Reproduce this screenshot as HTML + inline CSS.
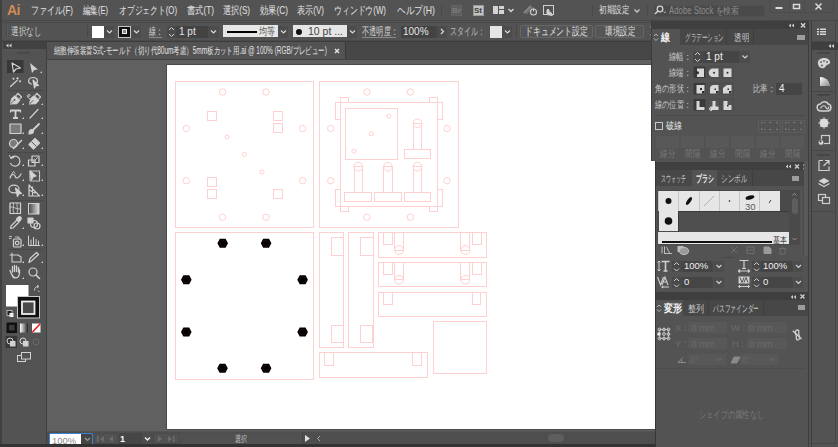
<!DOCTYPE html>
<html><head><meta charset="utf-8">
<style>
*{box-sizing:border-box;margin:0;padding:0}
html,body{width:838px;height:447px;overflow:hidden;background:#535353;font-family:"Liberation Sans",sans-serif;color:#d9d9d9}
.a{position:absolute}
.t{position:absolute;white-space:nowrap;font-size:10px;line-height:12px}
.box{position:absolute;background:#454545}
.fit{overflow:visible}.fit>span{display:inline-block;transform-origin:0 50%}
.sep{position:absolute;background:#3e3e3e}
</style></head><body>
<!-- MENU BAR -->
<div class="a" style="left:0;top:0;width:838px;height:20px;background:#535353"></div>
<div class="a" style="left:0;top:20px;width:838px;height:1px;background:#474747"></div>
<div class="t" style="left:7px;top:3px;font-size:14px;line-height:15px;font-weight:bold;color:#d18b57;letter-spacing:-0.5px">Ai</div>
<div id="menus"></div>
<div class="t fit" style="left:31px;top:4px;width:42px;font-size:11px;color:#e4e4e4"><span>ファイル(F)</span></div>
<div class="t fit" style="left:83px;top:4px;width:25px;font-size:11px;color:#e4e4e4"><span>編集(E)</span></div>
<div class="t fit" style="left:119px;top:4px;width:58px;font-size:11px;color:#e4e4e4"><span>オブジェクト(O)</span></div>
<div class="t fit" style="left:187px;top:4px;width:27px;font-size:11px;color:#e4e4e4"><span>書式(T)</span></div>
<div class="t fit" style="left:223px;top:4px;width:27px;font-size:11px;color:#e4e4e4"><span>選択(S)</span></div>
<div class="t fit" style="left:260px;top:4px;width:28px;font-size:11px;color:#e4e4e4"><span>効果(C)</span></div>
<div class="t fit" style="left:297px;top:4px;width:27px;font-size:11px;color:#e4e4e4"><span>表示(V)</span></div>
<div class="t fit" style="left:334px;top:4px;width:52px;font-size:11px;color:#e4e4e4"><span>ウィンドウ(W)</span></div>
<div class="t fit" style="left:397px;top:4px;width:38px;font-size:11px;color:#e4e4e4"><span>ヘルプ(H)</span></div>
<div class="a" style="left:441px;top:5px;width:1px;height:11px;background:#4a4a4a"></div>
<div class="a" style="left:451px;top:5px;width:11px;height:11px;background:#5e5e5e;border:1px solid #646464"></div>
<div class="t" style="left:452px;top:5px;font-size:8px;line-height:11px;color:#7c7c7c;font-weight:bold">Br</div>
<div class="a" style="left:473px;top:5px;width:11px;height:11px;background:#c4c4c4;border:1px solid #9a9a9a"></div>
<div class="t" style="left:474px;top:5px;font-size:8px;line-height:11px;color:#3e3e3e;font-weight:bold">St</div>
<div class="a" style="left:493px;top:6px;width:5px;height:8px;background:#d4d4d4"></div>
<div class="a" style="left:499px;top:6px;width:5px;height:3px;background:#d4d4d4"></div>
<div class="a" style="left:499px;top:10px;width:5px;height:4px;background:#d4d4d4"></div>
<svg class="a" style="left:0;top:0" width="838" height="21" viewBox="0 0 838 21">
<g fill="none" stroke="#d8d8d8" stroke-width="1.3">
<path d="M508.5 9 l2.5 2.5 l2.5 -2.5"/>
<path d="M634.5 9.5 l2.5 2.5 l2.5 -2.5" stroke="#c8c8c8"/>
<path d="M524 13 L531 6" stroke="#888" stroke-width="2"/><path d="M526 14 L533 7" stroke="#777" stroke-width="1.5"/>
<circle cx="533.5" cy="12" r="3" stroke="#cfcfcf" stroke-width="1.1"/><path d="M533.5 8.5 v3" stroke="#cfcfcf" stroke-width="1.1"/>
<rect x="543.5" y="5.5" width="10" height="9" stroke="#cfcfcf" stroke-width="1"/>
<path d="M547 15 v-5 l1 -1 l1 1 v2 l2 0.5 l1 2 v1.5" fill="#cfcfcf" stroke="#cfcfcf" stroke-width="1"/>

<path d="M775.5 8 h7" stroke="#dcdcdc" stroke-width="2"/>
<rect x="793.5" y="4.5" width="6" height="4" stroke="#dcdcdc" stroke-width="1.5"/>
<path d="M815.5 3.5 l6 6 M821.5 3.5 l-6 6" stroke="#dcdcdc" stroke-width="1.5"/>
</g></svg>
<div class="a" style="left:592px;top:5px;width:1px;height:11px;background:#4a4a4a"></div>
<div class="t fit" style="left:599px;top:4px;width:30px;font-size:10px;color:#e0e0e0"><span>初期設定</span></div>
<div class="a" style="left:647px;top:5px;width:1px;height:11px;background:#4a4a4a"></div>
<div class="a" style="left:654px;top:5px;width:111px;height:12px;background:#4a4a4a;border-radius:3px;border:1px solid #505050"></div>
<div class="t fit" style="left:669px;top:5px;width:70px;font-size:10px;color:#8c8c8c"><span>Adobe Stock を検索</span></div>
<svg class="a" style="left:650px;top:0" width="20" height="20" viewBox="650 0 20 20"><g fill="none" stroke="#d0d0d0"><circle cx="660" cy="9" r="2.8" stroke-width="1.3"/><path d="M658 11 l-3 3" stroke-width="1.6"/><path d="M663.5 11.5 l1.2 1.2 l1.2 -1.2" stroke-width="0.9"/></g></svg>
<div class="a" style="left:770px;top:-1px;width:64px;height:14px;border:1px solid #4c4c4c;border-radius:0 0 3px 3px"></div>
<div class="a" style="left:789px;top:0;width:1px;height:12px;background:#4c4c4c"></div>
<div class="a" style="left:804px;top:0;width:1px;height:12px;background:#4c4c4c"></div>
<!-- CONTROL BAR -->
<div class="a" style="left:0;top:21px;width:838px;height:20px;background:#535353"></div>
<div class="a" style="left:0;top:41px;width:838px;height:1px;background:#3c3c3c"></div>

<div class="a" style="left:1px;top:22px;width:652px;height:19px;border:1px solid #4a4a4a;border-radius:2px"></div>
<div class="a" style="left:6px;top:26px;width:1px;height:11px;background:#474747"></div>
<div class="a" style="left:7px;top:26px;width:1px;height:11px;background:#5e5e5e"></div>
<div class="t fit" style="left:11px;top:25px;width:30px;font-size:11px;color:#d2d2d2"><span>選択なし</span></div>
<div class="a" style="left:87px;top:25px;width:1px;height:12px;background:#474747"></div>
<div class="a" style="left:92px;top:26px;width:12px;height:12px;background:#fff"></div>
<div class="a" style="left:104px;top:26px;width:10px;height:12px;background:#4c4c4c"></div>
<div class="a" style="left:118px;top:26px;width:13px;height:12px;background:#111;border:1px solid #c4c4c4"></div>
<div class="a" style="left:122px;top:29px;width:5px;height:5px;border:1px solid #eee;background:#888"></div>
<div class="a" style="left:131px;top:26px;width:10px;height:12px;background:#4c4c4c"></div>
<div class="t fit" style="left:149px;top:25px;width:14px;font-size:11px;color:#d2d2d2"><span>線：</span></div>
<div class="a" style="left:149px;top:37px;width:13px;height:1px;background:#8a8a8a"></div>
<div class="a" style="left:167px;top:26px;width:9px;height:12px;background:#4a4a4a"></div>
<div class="a" style="left:176px;top:26px;width:32px;height:12px;background:#434343"></div>
<div class="t" style="left:179px;top:26px;font-size:10px;color:#e6e6e6">1 pt</div>
<div class="a" style="left:208px;top:26px;width:11px;height:12px;background:#4c4c4c"></div>
<div class="a" style="left:223px;top:25px;width:55px;height:12px;background:#e6e6e6"></div>
<div class="a" style="left:227px;top:31px;width:30px;height:1.5px;background:#000"></div>
<div class="t fit" style="left:259px;top:25px;width:16px;font-size:11px;color:#555"><span>均等</span></div>
<div class="a" style="left:278px;top:26px;width:10px;height:12px;background:#4c4c4c"></div>
<div class="a" style="left:293px;top:25px;width:54px;height:12px;background:#e6e6e6"></div>
<div class="a" style="left:296px;top:29px;width:6px;height:6px;border-radius:50%;background:#111"></div>
<div class="t" style="left:308px;top:25px;font-size:10.5px;color:#444">10 pt ...</div>
<div class="a" style="left:347px;top:26px;width:10px;height:12px;background:#4c4c4c"></div>
<div class="t fit" style="left:362px;top:25px;width:36px;font-size:11px;color:#d2d2d2"><span>不透明度：</span></div>
<div class="a" style="left:362px;top:37px;width:34px;height:1px;background:#8a8a8a"></div>
<div class="a" style="left:401px;top:26px;width:36px;height:12px;background:#434343"></div>
<div class="t" style="left:403px;top:26px;font-size:10px;color:#e6e6e6">100%</div>
<div class="a" style="left:437px;top:26px;width:10px;height:12px;background:#4c4c4c"></div>
<div class="t fit" style="left:450px;top:25px;width:35px;font-size:11px;color:#bdbdbd"><span>スタイル：</span></div>
<div class="a" style="left:490px;top:26px;width:12px;height:12px;background:#e6e6e6"></div>
<div class="a" style="left:502px;top:26px;width:10px;height:12px;background:#4c4c4c"></div>
<div class="a" style="left:516px;top:25px;width:1px;height:12px;background:#474747"></div>
<div class="a" style="left:520px;top:25px;width:73px;height:13px;border:1px solid #666;border-radius:2px;background:#555"></div>
<div class="t fit" style="left:525px;top:25px;width:63px;font-size:11px;color:#e0e0e0"><span>ドキュメント設定</span></div>
<div class="a" style="left:595px;top:25px;width:49px;height:13px;border:1px solid #666;border-radius:2px;background:#555"></div>
<div class="t fit" style="left:605px;top:25px;width:30px;font-size:11px;color:#e0e0e0"><span>環境設定</span></div>
<svg class="a" style="left:0;top:20px" width="660" height="22" viewBox="0 20 660 22">
<g fill="none" stroke="#d8d8d8" stroke-width="1.2">
<path d="M107 30.5 l2.5 2.5 l2.5 -2.5 M134 30.5 l2.5 2.5 l2.5 -2.5 M211 30.5 l2.5 2.5 l2.5 -2.5 M281 30.5 l2.5 2.5 l2.5 -2.5 M350 30.5 l2.5 2.5 l2.5 -2.5 M505 30.5 l2.5 2.5 l2.5 -2.5"/>
<path d="M441 29 l2.5 2.5 l-2.5 2.5"/>
<path d="M169 30 l2.5 -2.5 l2.5 2.5 M169 34 l2.5 2.5 l2.5 -2.5" stroke-width="1"/>
<path d="M650 27 a4 4 0 0 1 0 8" stroke="#999"/>
</g></svg>
<!-- TAB BAR -->
<div class="a" style="left:47px;top:42px;width:605px;height:18px;background:#474747"></div>
<div class="a" style="left:47px;top:42px;width:298px;height:17px;background:#535353"></div>
<div class="a" style="left:345px;top:42px;width:1px;height:17px;background:#3a3a3a"></div>
<div class="a" style="left:47px;top:59px;width:608px;height:1px;background:#424242"></div>

<div class="t fit" style="left:54px;top:45px;width:273px;font-size:10px;color:#e2e2e2"><span>細胞伸張装置S式-モールド（切り代80um考慮）5mm板カット用.ai @ 100% (RGB/プレビュー)</span></div>
<svg class="a" style="left:333px;top:47px" width="8" height="8" viewBox="0 0 8 8"><path d="M2 2 L6 6 M6 2 L2 6" stroke="#e6e6e6" stroke-width="1.4"/></svg>
<!-- TOOLS PANEL -->
<div class="a" style="left:0;top:0;width:2px;height:447px;background:#404040"></div>
<div class="a" style="left:3px;top:42px;width:43px;height:401px;background:#535353"></div>
<div class="a" style="left:3px;top:42px;width:43px;height:7px;background:#424242"></div>
<div class="a" style="left:46px;top:42px;width:1px;height:405px;background:#404040"></div>

<!-- TOOLS -->
<svg class="a" style="left:0;top:0" width="50" height="447" viewBox="0 0 50 447">
<g fill="#464646"><rect x="17" y="52" width="13" height="1.5"/></g>
<path d="M8.5 43.5 l-2.5 2 l2.5 2 z M11.5 43.5 l-2.5 2 l2.5 2 z" fill="#d0d0d0"/>
<rect x="7" y="60" width="16.5" height="13" fill="#383838"/>
<g fill="none" stroke="#d2d2d2" stroke-width="1.2" stroke-linejoin="round" stroke-linecap="round">
<!-- selection -->
<path d="M12 63 L20.5 68 L16 69 L13.5 72 Z"/>
<!-- magic wand -->
<path d="M10.5 86.5 L17 80.5"/><path d="M17.5 77.5v1.8M16.6 78.4h1.8M20 80.5v1.6M19.2 81.3h1.6M13.5 78v1.4M12.8 78.7h1.4" stroke-width="0.9"/>
<!-- lasso -->
<path d="M31.5 84 C27 83 28 77.5 33 77.5 C38 77.5 38.5 82 36 83"/><path d="M33 80 L38.5 85.5 L35.5 85.8 L34.5 88 Z" fill="#d2d2d2"/>
<!-- pen -->
<path d="M10.5 104 L11.8 98.8 L15.2 95.8 L19.7 100.3 L16.7 103.7 Z" fill="#d2d2d2"/><path d="M16.5 95 L18 93.5 L21.5 97 L20 98.5" stroke-width="1.3"/><path d="M10.8 103.7 L14 100.5" stroke="#535353" stroke-width="0.9"/><circle cx="14.6" cy="99.8" r="0.9" fill="#535353" stroke="none"/>
<!-- curvature pen -->
<path d="M29.5 104 L30.8 98.8 L34.2 95.8 L38.7 100.3 L35.7 103.7 Z" fill="#d2d2d2"/><path d="M35.5 95 L37 93.5 L40.5 97 L39 98.5" stroke-width="1.3"/><path d="M29.8 103.7 L33 100.5" stroke="#535353" stroke-width="0.9"/><path d="M30 99 C26.5 97.5 27 94 29.5 94.5 C31 95 30 97 28 96" stroke-width="0.9"/>
<!-- type T -->
<path d="M10.5 110.5 h10 M15.5 110.5 v7.5 M13 118 h5" stroke-width="1.8" stroke-linecap="butt"/><path d="M10.5 110 v2.5 M20.5 110 v2.5" stroke-width="1.2" stroke-linecap="butt"/>
<!-- line -->
<path d="M30 118 L38 109.5"/>
<!-- rectangle -->
<rect x="10" y="124" width="11" height="9.5" fill="#7a7a7a"/>
<!-- paintbrush -->
<path d="M29 134 C29 131 30.5 129.5 32 129.5 L33.5 131 C33.5 132.5 32 134 29 134 Z" fill="#d2d2d2"/><path d="M33 130 L39 124" stroke-width="1.8"/>
<!-- shaper -->
<circle cx="13.5" cy="143.5" r="4" fill="#7a7a7a"/><path d="M13.5 148.5 L21.5 140.5" stroke-width="1.6"/>
<!-- eraser -->
<path d="M29 144.5 L35 138.5 L39.5 143 L33.5 149 Z" fill="#d2d2d2"/><path d="M31.7 141.8 L36.2 146.3" stroke="#535353" stroke-width="1"/>
<!-- rotate -->
<path d="M11 158 A5 5 0 1 1 10.5 163.5"/><path d="M9.5 155.5 L11 158.5 L14 157.5" stroke-width="1"/>
<!-- scale -->
<rect x="28.5" y="160" width="6.5" height="6"/><rect x="32" y="156" width="7" height="6.5"/><path d="M33 162 l4.5 -4.5" stroke-width="0.9"/>
<!-- warp -->
<path d="M10 178 C12 172 15 175 15.5 177 C16 179 19 178 21 174" /><path d="M12 173.5 l1.5 -2 l1.5 2" stroke-width="0.9"/>
<!-- free transform -->
<path d="M30 171 L36 176 L33 177 L31.5 180 Z" fill="#d2d2d2"/><rect x="30" y="171" width="9.5" height="10" stroke-dasharray="1.5 1.2"/>
<!-- shape builder -->
<ellipse cx="14" cy="189" rx="5" ry="3.8"/><path d="M15.5 188 L21.5 193.5 L18.5 194 L17.5 196.5 Z" fill="#d2d2d2"/>
<!-- perspective grid -->
<path d="M29 185 L29 196 L39.5 196 Z M29 190 L35 193 M32.5 187 L32.5 196"/>
<!-- mesh -->
<rect x="10" y="203" width="10.5" height="10.5"/><path d="M10 207 C14 206 16 210 20.5 209 M13.5 203 C14 207 12 210 14 213.5 M17 203 C16.5 207 18.5 210 17 213.5" stroke-width="0.8"/>
<!-- eyedropper -->
<path d="M10.5 228.5 L11 226 L17 220 L19 222 L13 228 Z"/><path d="M16.5 219 L18.5 217 A1.8 1.8 0 0 1 21 219.5 L19 221.5" fill="#d2d2d2"/>
<!-- blend -->
<rect x="28" y="218" width="5" height="5" fill="#d2d2d2"/><circle cx="34" cy="224" r="3.5"/><circle cx="37" cy="226" r="3"/>
<!-- symbol sprayer -->
<rect x="13.5" y="239" width="7.5" height="8" rx="1"/><circle cx="17.2" cy="243" r="1.8"/><path d="M15.5 237 h3.5 v2 M9.5 236.5h2M9.5 238.5h1.5" stroke-width="0.9"/>
<!-- graph -->
<path d="M28.5 236 V245.5 H39.5 M31 245 V240 M33.5 245 V237.5 M36 245 V239.5 M38.5 245 V241" stroke-width="1"/>
<!-- artboard -->
<path d="M12 253 V262 H21 V257 L18 255 H10" stroke-width="1.1"/>
<!-- slice/pencil -->
<path d="M29 262.5 L30 258.5 L36.5 252.5 L38.5 254.5 L32 260.5 Z"/>
<!-- hand -->
<path d="M11.5 274 L10 270.5 M12.5 272 V266.5 M14.5 271.5 V265.5 M16.5 271.5 V266 M18.5 272 V267.5 M12 274.5 C13 279 19 279.5 19.5 273 V270" stroke-width="1.3"/>
<!-- zoom -->
<circle cx="33" cy="272" r="4"/><path d="M36 275 L39.5 278.5" stroke-width="1.6"/>
</g>
<g fill="#cfcfcf">
<path d="M30 63 L38 69.5 L34.5 70 L32 73 Z"/>
<path d="M40 73 h2 v-2 z"/>
<path d="M22 105 h2 v-2 z M41 105 h2 v-2 z M22 119 h2 v-2 z M41 119 h2 v-2 z M22 134 h2 v-2 z M41 134 h2 v-2 z M22 149 h2 v-2 z M41 149 h2 v-2 z M22 166 h2 v-2 z M41 166 h2 v-2 z M22 181 h2 v-2 z M41 181 h2 v-2 z M22 196 h2 v-2 z M41 196 h2 v-2 z M22 229 h2 v-2 z M22 246 h2 v-2 z M41 246 h2 v-2 z M22 263 h2 v-2 z M41 263 h2 v-2 z M22 279 h2 v-2 z"/>
</g>
<g fill="#484848"><rect x="7" y="90" width="36" height="1"/><rect x="7" y="152" width="36" height="1"/><rect x="7" y="200" width="36" height="1"/><rect x="7" y="249" width="36" height="1"/></g>
<!-- gradient tool -->
<defs><linearGradient id="gt" x1="0" x2="1"><stop offset="0" stop-color="#444"/><stop offset="1" stop-color="#ddd"/></linearGradient>
<linearGradient id="gm" x1="0" x2="1"><stop offset="0" stop-color="#fff"/><stop offset="1" stop-color="#222"/></linearGradient></defs>
<rect x="28.5" y="203.5" width="10.5" height="10.5" fill="url(#gt)" stroke="#d2d2d2" stroke-width="1"/>
<!-- fill / stroke -->
<rect x="6" y="285" width="22.5" height="21.5" fill="#fff"/>
<rect x="17.5" y="296.5" width="22" height="21.5" fill="#111" stroke="#c8c8c8" stroke-width="1"/>
<rect x="22" y="301.5" width="12.5" height="12.5" fill="#4a4a4a" stroke="#f0f0f0" stroke-width="1.8"/>
<path d="M34.5 290.5 C34.5 287.5 36 286.5 38.5 286.5 M37 285 l1.8 1.5 l-1.8 1.5 M39.5 292 l-1.5 -1.5" fill="none" stroke="#d2d2d2" stroke-width="0.9"/>
<rect x="7" y="310.5" width="5" height="5" fill="#222" stroke="#ccc" stroke-width="0.8"/><rect x="9.5" y="313" width="4" height="4" fill="#eee"/>
<!-- color modes -->
<rect x="6.5" y="322.5" width="10.5" height="10.5" fill="#111"/><rect x="9" y="325" width="5.5" height="5.5" fill="#3c3c3c"/>
<rect x="20" y="323.5" width="8" height="9" fill="url(#gm)"/>
<rect x="32" y="323.5" width="8.5" height="9" fill="#fff"/><path d="M32.3 332.2 L40.2 323.8" stroke="#e52020" stroke-width="1.6"/>
<!-- draw modes -->
<rect x="5.5" y="336" width="11.5" height="12" fill="#383838"/>
<g fill="none" stroke="#d2d2d2" stroke-width="1">
<circle cx="10" cy="341" r="3"/><rect x="10.5" y="341.5" width="4.5" height="4.5" fill="#d2d2d2"/>
<circle cx="23" cy="341" r="3"/><rect x="23.5" y="341.5" width="4.5" height="4.5" fill="#d2d2d2"/>
<circle cx="36" cy="342" r="3" stroke="#6a6a6a"/>
<rect x="17.5" y="355.5" width="8" height="6"/><rect x="21.5" y="352.5" width="9" height="6.5" fill="#535353"/>
</g>
</svg>

<!-- /TOOLS -->
<!-- CANVAS -->
<div class="a" style="left:47px;top:60px;width:608px;height:371px;background:#606060"></div>
<div class="a" style="left:166px;top:64px;width:490px;height:366px;background:#4a4a4a"></div>
<div class="a" style="left:167px;top:65px;width:488px;height:364px;background:#fff"></div>

<!-- ART -->
<svg class="a" style="left:0;top:0" width="838" height="447" viewBox="0 0 838 447"><g fill="none" stroke="#ffd0d0" stroke-width="1"><rect x="175.5" y="81.5" width="138.0" height="146.0"/><rect x="319.5" y="81.5" width="139.0" height="146.0"/><rect x="175.5" y="232.5" width="138.0" height="147.0"/><circle cx="222.6" cy="92.0" r="3.2"/><circle cx="367.0" cy="92.0" r="3.2"/><circle cx="266.0" cy="92.0" r="3.2"/><circle cx="410.4" cy="92.0" r="3.2"/><circle cx="186.3" cy="128.5" r="3.2"/><circle cx="330.7" cy="128.5" r="3.2"/><circle cx="302.6" cy="128.5" r="3.2"/><circle cx="447.0" cy="128.5" r="3.2"/><circle cx="186.3" cy="180.7" r="3.2"/><circle cx="330.7" cy="180.7" r="3.2"/><circle cx="302.6" cy="180.7" r="3.2"/><circle cx="447.0" cy="180.7" r="3.2"/><circle cx="222.5" cy="217.2" r="3.2"/><circle cx="366.9" cy="217.2" r="3.2"/><circle cx="266.0" cy="217.2" r="3.2"/><circle cx="410.4" cy="217.2" r="3.2"/><circle cx="227.0" cy="137.0" r="2"/><circle cx="244.4" cy="154.5" r="2"/><circle cx="262.0" cy="172.0" r="2"/><rect x="207.5" y="111.5" width="9.0" height="9.0"/><rect x="273.5" y="111.5" width="9.0" height="9.0"/><rect x="273.5" y="123.5" width="9.0" height="9.0"/><rect x="207.5" y="177.5" width="9.0" height="9.0"/><rect x="207.5" y="189.5" width="9.0" height="9.0"/><rect x="273.5" y="189.5" width="9.0" height="9.0"/><line x1="340.5" y1="97.5" x2="340.5" y2="211.5"/><line x1="437.5" y1="97.5" x2="437.5" y2="211.5"/><line x1="335.5" y1="102.5" x2="442.5" y2="102.5"/><line x1="335.5" y1="206.5" x2="442.5" y2="206.5"/><rect x="340.5" y="97.5" width="8.0" height="5.0"/><rect x="429.5" y="97.5" width="8.0" height="5.0"/><rect x="340.5" y="206.5" width="8.0" height="5.0"/><rect x="429.5" y="206.5" width="8.0" height="5.0"/><rect x="335.5" y="102.5" width="5.0" height="17.0"/><rect x="437.5" y="102.5" width="5.0" height="17.0"/><rect x="335.5" y="189.5" width="5.0" height="17.0"/><rect x="437.5" y="189.5" width="5.0" height="17.0"/><rect x="345.5" y="108.5" width="52.0" height="51.0"/><circle cx="388.9" cy="116.3" r="2"/><circle cx="371.4" cy="133.8" r="2"/><circle cx="353.9" cy="151.1" r="2"/><circle cx="417.5" cy="123.3" r="4.3"/><line x1="413.5" y1="123.5" x2="413.5" y2="149.5"/><line x1="421.5" y1="123.5" x2="421.5" y2="149.5"/><line x1="413.5" y1="123.5" x2="421.5" y2="123.5"/><rect x="404.5" y="149.5" width="26.0" height="9.0"/><circle cx="358.3" cy="166.7" r="4.3"/><line x1="354.5" y1="166.5" x2="354.5" y2="192.5"/><line x1="362.5" y1="166.5" x2="362.5" y2="192.5"/><line x1="354.5" y1="166.5" x2="362.5" y2="166.5"/><rect x="344.5" y="192.5" width="27.0" height="9.0"/><circle cx="387.9" cy="166.7" r="4.3"/><line x1="383.5" y1="166.5" x2="383.5" y2="192.5"/><line x1="392.5" y1="166.5" x2="392.5" y2="192.5"/><line x1="383.5" y1="166.5" x2="392.5" y2="166.5"/><rect x="374.5" y="192.5" width="27.0" height="9.0"/><circle cx="417.5" cy="166.7" r="4.3"/><line x1="413.5" y1="166.5" x2="413.5" y2="192.5"/><line x1="421.5" y1="166.5" x2="421.5" y2="192.5"/><line x1="413.5" y1="166.5" x2="421.5" y2="166.5"/><rect x="404.5" y="192.5" width="26.0" height="9.0"/><rect x="319.5" y="232.5" width="24.0" height="115.0"/><rect x="331.5" y="237.5" width="12.0" height="18.0"/><rect x="331.5" y="325.5" width="12.0" height="17.0"/><rect x="348.5" y="232.5" width="25.0" height="115.0"/><rect x="360.5" y="237.5" width="13.0" height="18.0"/><rect x="360.5" y="325.5" width="12.0" height="17.0"/><rect x="378.5" y="232.5" width="108.0" height="25.0"/><rect x="383.5" y="232.5" width="9.0" height="12.0"/><rect x="472.5" y="232.5" width="9.0" height="12.0"/><line x1="394.5" y1="232.5" x2="394.5" y2="250.5"/><line x1="403.5" y1="232.5" x2="403.5" y2="250.5"/><line x1="394.5" y1="250.5" x2="403.5" y2="250.5"/><circle cx="399.1" cy="250.0" r="4.4"/><line x1="460.5" y1="232.5" x2="460.5" y2="250.5"/><line x1="469.5" y1="232.5" x2="469.5" y2="250.5"/><line x1="460.5" y1="250.5" x2="469.5" y2="250.5"/><circle cx="465.3" cy="250.0" r="4.4"/><rect x="378.5" y="262.5" width="108.0" height="24.0"/><rect x="383.5" y="262.5" width="9.0" height="12.0"/><rect x="472.5" y="262.5" width="9.0" height="12.0"/><line x1="394.5" y1="262.5" x2="394.5" y2="279.5"/><line x1="403.5" y1="262.5" x2="403.5" y2="279.5"/><line x1="394.5" y1="279.5" x2="403.5" y2="279.5"/><circle cx="399.1" cy="279.7" r="4.4"/><line x1="460.5" y1="262.5" x2="460.5" y2="279.5"/><line x1="469.5" y1="262.5" x2="469.5" y2="279.5"/><line x1="460.5" y1="279.5" x2="469.5" y2="279.5"/><circle cx="465.3" cy="279.7" r="4.4"/><rect x="378.5" y="292.5" width="108.0" height="24.0"/><rect x="383.5" y="292.5" width="9.0" height="12.0"/><rect x="472.5" y="292.5" width="8.0" height="12.0"/><rect x="433.5" y="321.5" width="53.0" height="52.0"/><rect x="319.5" y="352.5" width="108.0" height="25.0"/><rect x="324.5" y="352.5" width="9.0" height="13.0"/><rect x="412.5" y="352.5" width="9.0" height="13.0"/></g><polygon points="217.4,243.3 219.8,238.8 225.6,238.8 228.0,243.3 225.6,247.8 219.8,247.8" fill="#000"/><circle cx="222.7" cy="243.3" r="3" fill="none" stroke="#3a1010" stroke-width="0.6"/><polygon points="260.8,243.3 263.2,238.8 269.0,238.8 271.4,243.3 269.0,247.8 263.2,247.8" fill="#000"/><circle cx="266.1" cy="243.3" r="3" fill="none" stroke="#3a1010" stroke-width="0.6"/><polygon points="181.0,279.8 183.4,275.3 189.2,275.3 191.6,279.8 189.2,284.3 183.4,284.3" fill="#000"/><circle cx="186.3" cy="279.8" r="3" fill="none" stroke="#3a1010" stroke-width="0.6"/><polygon points="297.3,279.8 299.7,275.3 305.5,275.3 307.9,279.8 305.5,284.3 299.7,284.3" fill="#000"/><circle cx="302.6" cy="279.8" r="3" fill="none" stroke="#3a1010" stroke-width="0.6"/><polygon points="181.0,332.0 183.4,327.5 189.2,327.5 191.6,332.0 189.2,336.5 183.4,336.5" fill="#000"/><circle cx="186.3" cy="332.0" r="3" fill="none" stroke="#3a1010" stroke-width="0.6"/><polygon points="297.3,332.0 299.7,327.5 305.5,327.5 307.9,332.0 305.5,336.5 299.7,336.5" fill="#000"/><circle cx="302.6" cy="332.0" r="3" fill="none" stroke="#3a1010" stroke-width="0.6"/><polygon points="217.2,368.2 219.6,363.7 225.4,363.7 227.8,368.2 225.4,372.7 219.6,372.7" fill="#000"/><circle cx="222.5" cy="368.2" r="3" fill="none" stroke="#3a1010" stroke-width="0.6"/><polygon points="260.8,368.2 263.2,363.7 269.0,363.7 271.4,368.2 269.0,372.7 263.2,372.7" fill="#000"/><circle cx="266.1" cy="368.2" r="3" fill="none" stroke="#3a1010" stroke-width="0.6"/></svg>
<!-- /ART -->
<!-- STATUS BAR -->
<div class="a" style="left:47px;top:432px;width:608px;height:12px;background:#4e4e4e"></div>
<div class="a" style="left:49px;top:433px;width:44px;height:14px;border:1px solid #3b82d6;border-bottom:none;border-radius:2px 2px 0 0;background:#454545"></div>
<div class="a" style="left:50px;top:434px;width:31px;height:13px;background:#fff"></div>
<div class="t" style="left:52px;top:435px;font-size:9.5px;line-height:12px;color:#8a8a8a">100%</div>
<div class="a" style="left:94px;top:433px;width:24px;height:11px;background:#525252;border:1px solid #4a4a4a"></div>
<div class="a" style="left:119px;top:433px;width:23px;height:11px;background:#464646"></div>
<div class="t" style="left:120px;top:433px;font-size:9px;line-height:12px;color:#fff;font-weight:bold">1</div>
<div class="a" style="left:142px;top:433px;width:11px;height:11px;background:#4c4c4c"></div>
<div class="a" style="left:153px;top:433px;width:27px;height:11px;background:#525252;border:1px solid #4a4a4a"></div>
<div class="a" style="left:180px;top:433px;width:122px;height:11px;background:#515151"></div>
<div class="t fit" style="left:235px;top:433px;width:12px;font-size:9px;line-height:12px;color:#c8c8c8"><span>選択</span></div>
<div class="a" style="left:302px;top:433px;width:1px;height:11px;background:#444"></div>
<div class="a" style="left:548px;top:434px;width:16px;height:8px;border-radius:4px;background:#5e5e5e"></div>
<svg class="a" style="left:40px;top:430px" width="300" height="17" viewBox="40 430 300 17">
<g fill="none" stroke="#d8d8d8" stroke-width="1.2">
<path d="M58 438 l2.5 2.5 l2.5 -2.5" stroke="#999" transform="translate(27,0)"/>
<path d="M145 437.5 l2.5 2.5 l2.5 -2.5" stroke="#f0f0f0" stroke-width="1.4"/>
</g>
<g fill="#6c6c6c">
<rect x="97" y="436" width="1.5" height="6"/><path d="M104 436 v6 l-4 -3 z"/><path d="M113 436 v6 l-4 -3 z"/>
<path d="M158 436 v6 l4 -3 z"/><path d="M168 436 v6 l4 -3 z"/><rect x="173" y="436" width="1.5" height="6"/>
</g>
<path d="M305 435 v7 l5 -3.5 z" fill="#e0e0e0"/>
<path d="M320 436 l-2.5 2.5 l2.5 2.5" fill="none" stroke="#aaa" stroke-width="1"/>
</svg>

<div class="a" style="left:0;top:444px;width:838px;height:3px;background:#333"></div>

<!-- RIGHT PANELS -->
<!-- STROKE PANEL -->
<div class="a" style="left:651px;top:21px;width:157px;height:140px;background:#535353;border-left:1px solid #3c3c3c"></div>
<div class="a" style="left:652px;top:21px;width:156px;height:8px;background:#3f3f3f"></div>
<div class="a" style="left:652px;top:29px;width:156px;height:16px;background:#474747"></div>
<div class="a" style="left:652px;top:29px;width:28px;height:17px;background:#535353"></div>
<div class="a" style="left:726px;top:29px;width:1px;height:16px;background:#3e3e3e"></div>
<div class="a" style="left:753px;top:29px;width:1px;height:16px;background:#3e3e3e"></div>
<div class="t fit" style="left:661px;top:31px;width:9px;font-size:11px;line-height:13px;color:#f0f0f0;font-weight:bold"><span>線</span></div>
<div class="t fit" style="left:685px;top:31px;width:39px;font-size:10px;line-height:13px;color:#c6c6c6"><span>グラデーション</span></div>
<div class="t fit" style="left:734px;top:31px;width:15px;font-size:10px;line-height:13px;color:#c6c6c6"><span>透明</span></div>
<div class="a" style="left:797px;top:35px;width:8px;height:5px;background:#9c9c9c"></div>
<div class="t fit" style="left:669px;top:51px;width:22px;font-size:10px;color:#c8c8c8"><span>線幅：</span></div>
<div class="a" style="left:693px;top:51px;width:10px;height:12px;background:#4a4a4a"></div>
<div class="a" style="left:703px;top:51px;width:36px;height:12px;background:#454545"></div>
<div class="t" style="left:706px;top:51px;font-size:10px;color:#f2f2f2">1 pt</div>
<div class="a" style="left:739px;top:51px;width:11px;height:12px;background:#4c4c4c"></div>
<div class="t fit" style="left:669px;top:67px;width:22px;font-size:10px;color:#c8c8c8"><span>線端：</span></div>
<div class="t fit" style="left:655px;top:83px;width:36px;font-size:10px;color:#c8c8c8"><span>角の形状：</span></div>
<div class="t fit" style="left:655px;top:99px;width:36px;font-size:10px;color:#c8c8c8"><span>線の位置：</span></div>
<div class="t fit" style="left:753px;top:83px;width:22px;font-size:10px;color:#c8c8c8"><span>比率：</span></div>
<div class="a" style="left:776px;top:83px;width:26px;height:12px;background:#454545"></div>
<div class="t" style="left:779px;top:83px;font-size:10px;color:#f2f2f2">4</div>
<div class="a" style="left:655px;top:115px;width:150px;height:1px;background:#4a4a4a"></div>
<div class="a" style="left:655px;top:122px;width:8px;height:8px;border:1px solid #c8c8c8"></div>
<div class="t fit" style="left:666px;top:120px;width:16px;font-size:10px;color:#e6e6e6"><span>破線</span></div>
<div class="a" style="left:758px;top:120px;width:23px;height:13px;border:1px solid #5c5c5c"></div>
<div class="a" style="left:782px;top:120px;width:23px;height:13px;border:1px solid #5c5c5c"></div>
<div class="a" style="left:656px;top:136px;width:23px;height:12px;background:#585858"></div>
<div class="a" style="left:681px;top:136px;width:23px;height:12px;background:#585858"></div>
<div class="a" style="left:706px;top:136px;width:23px;height:12px;background:#585858"></div>
<div class="a" style="left:731px;top:136px;width:23px;height:12px;background:#585858"></div>
<div class="a" style="left:756px;top:136px;width:23px;height:12px;background:#585858"></div>
<div class="a" style="left:781px;top:136px;width:23px;height:12px;background:#585858"></div>
<div class="t fit" style="left:660px;top:148px;width:15px;font-size:10px;color:#777"><span>線分</span></div>
<div class="t fit" style="left:685px;top:148px;width:15px;font-size:10px;color:#777"><span>間隔</span></div>
<div class="t fit" style="left:710px;top:148px;width:15px;font-size:10px;color:#777"><span>線分</span></div>
<div class="t fit" style="left:735px;top:148px;width:15px;font-size:10px;color:#777"><span>間隔</span></div>
<div class="t fit" style="left:760px;top:148px;width:15px;font-size:10px;color:#777"><span>線分</span></div>
<div class="t fit" style="left:785px;top:148px;width:15px;font-size:10px;color:#777"><span>間隔</span></div>
<svg class="a" style="left:648px;top:18px" width="162" height="145" viewBox="648 18 162 145">
<g fill="none" stroke="#cfcfcf" stroke-width="1.1">
<path d="M791 23.5 l-2.2 2 l2.2 2 z M794 23.5 l-2.2 2 l2.2 2 z" fill="#cfcfcf" stroke="none"/>
<path d="M801 23.3 l4.2 4.2 M805.2 23.3 l-4.2 4.2" stroke-width="1.5"/>
<path d="M654 36 l2 -2 l2 2 M654 38.5 l2 2 l2 -2" stroke-width="0.8"/>
<path d="M695 55 l2.5 -2.5 l2.5 2.5 M695 59 l2.5 2.5 l2.5 -2.5" stroke-width="1"/>
<path d="M742.5 55.5 l2.5 2.5 l2.5 -2.5" stroke-width="1.2"/>
</g>
<!-- buttons -->
<g fill="#3a3a3a"><rect x="693.5" y="66.5" width="12" height="11.5"/><rect x="693.5" y="83" width="12" height="11.5"/><rect x="693.5" y="99" width="12" height="11.5"/></g>
<g fill="none" stroke="#4c4c4c" stroke-width="1"><rect x="707.5" y="66.5" width="12" height="11.5"/><rect x="721.5" y="66.5" width="12" height="11.5"/><rect x="707.5" y="83" width="12" height="11.5"/><rect x="721.5" y="83" width="12" height="11.5"/><rect x="707.5" y="99" width="12" height="11.5"/><rect x="721.5" y="99" width="12" height="11.5"/></g>
<g fill="#d8d8d8">
<rect x="697" y="68.5" width="7" height="8.5"/>
<path d="M713 68.5 h5.5 v8.5 h-5.5 a4.25 4.25 0 0 1 0 -8.5 z"/>
<rect x="723.5" y="68.5" width="8" height="8.5"/>
<path d="M696.5 85 h8 v8.5 h-8 z"/>
<path d="M714 85 h4.5 v8.5 h-8.5 v-4.5 a4 4 0 0 1 4 -4 z"/>
<path d="M727 85 h4.5 v8.5 h-8.5 v-5.5 z"/>
<path d="M696.5 101 h3 v6 h5 v3 h-8 z"/>
<path d="M712.5 101 h3 v5.5 h3 v3.5 h-8 v-3.5 h2 z"/>
<path d="M723.5 101 h4 v4 h4 v5 h-8 z"/>
</g>
<g fill="#2e2e2e">
<circle cx="697.5" cy="72.75" r="1.5"/><circle cx="714" cy="72.75" r="1"/><circle cx="727.5" cy="72.75" r="1"/>
<rect x="700" y="88" width="2" height="2"/><rect x="702" y="91" width="2.5" height="2.5"/>
<rect x="714.5" y="88.5" width="1.5" height="1.5"/><rect x="716" y="91" width="2.5" height="2.5"/>
<rect x="727.5" y="88.5" width="1.5" height="1.5"/><rect x="729" y="91" width="2.5" height="2.5"/>
<circle cx="711" cy="109" r="1.5" fill="none" stroke="#d8d8d8" stroke-width="1"/>
<rect x="727" y="105" width="1.5" height="1.5"/>
</g>
<g fill="none" stroke="#7a7a7a" stroke-width="1" stroke-dasharray="2.5 1.5">
<path d="M761.5 124 v-1.5 h4 M769 122.5 h4 M776 122.5 h1.5 v1.5 M761.5 128 v1.5 h4 M769 129.5 h4 M776 129.5 h1.5 v-1.5"/>
<path d="M785.5 124 v-1.5 h4 M793 122.5 h4 M800 122.5 h1.5 v1.5 M785.5 128 v1.5 h4 M793 129.5 h4 M800 129.5 h1.5 v-1.5"/>
</g>
</svg>

<div class="a" style="left:655px;top:161px;width:153px;height:286px;background:#535353"></div>
<!-- BRUSH PANEL -->
<div class="a" style="left:655px;top:161px;width:153px;height:95px;background:#595959"></div>
<div class="a" style="left:655px;top:161px;width:149px;height:95px;background:#535353;border-left:1px solid #363636;border-right:1px solid #4a4a4a"></div>
<div class="a" style="left:656px;top:162px;width:148px;height:8px;background:#3f3f3f"></div>
<div class="a" style="left:656px;top:170px;width:148px;height:16px;background:#474747"></div>
<div class="a" style="left:692px;top:170px;width:25px;height:17px;background:#535353"></div>
<div class="a" style="left:752px;top:170px;width:1px;height:16px;background:#3e3e3e"></div>
<div class="t fit" style="left:661px;top:172px;width:25px;font-size:10px;line-height:13px;color:#c6c6c6"><span>スウォッチ</span></div>
<div class="t fit" style="left:696px;top:172px;width:18px;font-size:10px;line-height:13px;color:#f0f0f0;font-weight:bold"><span>ブラシ</span></div>
<div class="t fit" style="left:721px;top:172px;width:26px;font-size:10px;line-height:13px;color:#c6c6c6"><span>シンボル</span></div>
<div class="a" style="left:792px;top:176px;width:7px;height:5px;background:#9c9c9c"></div>
<div class="a" style="left:657px;top:190px;width:143px;height:55px;background:#4a4a4a"></div>
<div class="a" style="left:658px;top:191px;width:122px;height:20px;background:#c6c6c6"></div>
<div class="a" style="left:659px;top:191px;width:19px;height:20px;background:#e6e6e6"></div>
<div class="a" style="left:679px;top:191px;width:20px;height:20px;background:#e6e6e6"></div>
<div class="a" style="left:700px;top:191px;width:19px;height:20px;background:#e6e6e6"></div>
<div class="a" style="left:720px;top:191px;width:19px;height:20px;background:#e6e6e6"></div>
<div class="a" style="left:740px;top:191px;width:19px;height:20px;background:#e6e6e6"></div>
<div class="a" style="left:760px;top:191px;width:20px;height:20px;background:#e6e6e6"></div>
<div class="a" style="left:659px;top:211px;width:19px;height:20px;background:#e6e6e6"></div>
<div class="a" style="left:678px;top:211px;width:111px;height:21px;background:#4f4f4f;border-top:1px solid #3a3a3a;border-left:1px solid #3a3a3a"></div>
<div class="a" style="left:658px;top:232px;width:131px;height:12px;background:#e6e6e6"></div>
<div class="a" style="left:662px;top:241px;width:110px;height:1.5px;background:#111"></div>
<div class="t fit" style="left:773px;top:236px;width:14px;font-size:9px;line-height:9px;height:8px;overflow:hidden;color:#333"><span>基本</span></div>
<div class="t" style="left:745px;top:202px;font-size:9.5px;line-height:10px;color:#5a5a5a">30</div>
<div class="a" style="left:791px;top:191px;width:8px;height:53px;background:#4a4a4a"></div>
<div class="a" style="left:792px;top:198px;width:6px;height:16px;border-radius:3px;background:#5e5e5e"></div>
<svg class="a" style="left:650px;top:160px" width="160" height="98" viewBox="650 160 160 98">
<g fill="none" stroke="#cfcfcf" stroke-width="0.9">
<path d="M788 164.5 l-2.2 2 l2.2 2 z M791 164.5 l-2.2 2 l2.2 2 z" fill="#cfcfcf" stroke="none"/>
<path d="M795 164.5 l4 4 M799 164.5 l-4 4" stroke-width="1.3"/>
<path d="M803.5 164 v2 M803.5 167.5 v2" stroke="#999"/>
<path d="M792.5 195.5 l2 -2 l2 2 M792.5 238 l2 2 l2 -2" stroke="#9a9a9a"/>
</g>
<g fill="#111">
<circle cx="668.5" cy="201" r="3"/>
<ellipse cx="689" cy="201" rx="1.8" ry="4.5" transform="rotate(35 689 201)"/>
<circle cx="729.5" cy="201" r="0.8"/>
<ellipse cx="750" cy="197.5" rx="4.5" ry="2" transform="rotate(-15 750 197.5)"/>
<path d="M769 203 l2 -3" stroke="#111" stroke-width="0.8"/>
<circle cx="668.5" cy="221" r="3.8"/>
</g>
<path d="M704 206 L714 196" stroke="#999" stroke-width="0.7"/>
<g fill="none" stroke="#bdbdbd" stroke-width="1">
<path d="M662 246.5 v7 M664.5 246.5 v7 M666.5 247 l3 6 M664 253.5 h8"/>
<rect x="678" y="246.5" width="5" height="5" fill="#bdbdbd"/><ellipse cx="684" cy="251" rx="4.5" ry="3.5" fill="#9a9a9a" stroke="#bdbdbd"/>
</g>
<g fill="none" stroke="#6e6e6e" stroke-width="1">
<path d="M731 247 l6 6 M737 247 l-6 6"/>
<rect x="747" y="247" width="7" height="6.5"/><path d="M747 250 h7"/>
<path d="M764 247 h5 l2 2 v4.5 h-7 z" fill="#9a9a9a" stroke="#9a9a9a"/>
<path d="M779 248.5 h7 M780 249 v5 h5 v-5 M781.5 247 h2"/>
</g>
</svg>


<!-- CHAR PANEL -->
<div class="a" style="left:655px;top:256px;width:153px;height:36px;background:#535353;border-left:1px solid #363636"></div>
<div class="a" style="left:723px;top:257px;width:11px;height:1px;background:#474747"></div>
<div class="a" style="left:672px;top:261px;width:10px;height:11px;background:#4a4a4a"></div>
<div class="a" style="left:682px;top:261px;width:31px;height:11px;background:#454545"></div>
<div class="a" style="left:714px;top:261px;width:10px;height:11px;background:#4c4c4c"></div>
<div class="a" style="left:752px;top:261px;width:9px;height:11px;background:#4a4a4a"></div>
<div class="a" style="left:761px;top:261px;width:32px;height:11px;background:#454545"></div>
<div class="a" style="left:794px;top:261px;width:9px;height:11px;background:#4c4c4c"></div>
<div class="a" style="left:672px;top:277px;width:10px;height:11px;background:#4a4a4a"></div>
<div class="a" style="left:682px;top:277px;width:31px;height:11px;background:#454545"></div>
<div class="a" style="left:714px;top:277px;width:10px;height:11px;background:#4c4c4c"></div>
<div class="a" style="left:752px;top:277px;width:9px;height:11px;background:#4a4a4a"></div>
<div class="a" style="left:761px;top:277px;width:32px;height:11px;background:#454545"></div>
<div class="a" style="left:794px;top:277px;width:9px;height:11px;background:#4c4c4c"></div>
<div class="t" style="left:684px;top:260px;font-size:9.5px;color:#f0f0f0">100%</div>
<div class="t" style="left:763px;top:260px;font-size:9.5px;color:#f0f0f0">100%</div>
<div class="t" style="left:684px;top:276px;font-size:9.5px;color:#f0f0f0">0</div>
<div class="t" style="left:763px;top:276px;font-size:9.5px;color:#f0f0f0">0</div>
<svg class="a" style="left:650px;top:255px" width="160" height="38" viewBox="650 255 160 38">
<g fill="none" stroke="#cfcfcf" stroke-width="1">
<path d="M674 265 l2.5 -2.5 l2.5 2.5 M674 268.5 l2.5 2.5 l2.5 -2.5 M754 265 l2.5 -2.5 l2.5 2.5 M754 268.5 l2.5 2.5 l2.5 -2.5"/>
<path d="M674 281 l2.5 -2.5 l2.5 2.5 M674 284.5 l2.5 2.5 l2.5 -2.5 M754 281 l2.5 -2.5 l2.5 2.5 M754 284.5 l2.5 2.5 l2.5 -2.5"/>
<path d="M716.5 265 l2.5 2.5 l2.5 -2.5 M796 265 l2.5 2.5 l2.5 -2.5 M716.5 281 l2.5 2.5 l2.5 -2.5 M796 281 l2.5 2.5 l2.5 -2.5" stroke-width="1.2"/>
<path d="M659 261 v10 M657.5 262.5 l1.5 -1.5 l1.5 1.5 M657.5 269.5 l1.5 1.5 l1.5 -1.5"/>
<path d="M661.5 261.5 h8 M665.5 261.5 v9.5 M663.5 271 h4" stroke-width="1.6"/>
<path d="M739.5 260.5 h9 M744 260.5 v8 M742 268.5 h4 M738.5 271 h11 M740 269.5 l-1.5 1.5 l1.5 1.5 M748 269.5 l1.5 1.5 l-1.5 1.5" stroke-width="1.2"/>
<path d="M657.5 277 l3 8 l3 -8 M662 285 l3 -8 l3 8 M663.5 282 h3 M662 287 h7 M663 286 l-1 1 l1 1" stroke-width="1.1"/>
<rect x="738.5" y="276.5" width="11" height="7" fill="#cfcfcf" stroke="none"/>
<path d="M740 277.5 l2 5 l2 -5 M744 282.5 l2 -5 l2 5" stroke="#535353" stroke-width="1"/>
<path d="M738.5 286.5 h11 M740 285 l-1.5 1.5 l1.5 1.5 M748 285 l1.5 1.5 l-1.5 1.5" stroke-width="1"/>
</g></svg>
<!-- TRANSFORM PANEL -->
<div class="a" style="left:655px;top:292px;width:153px;height:155px;background:#535353;border-left:1px solid #363636"></div>
<div class="a" style="left:656px;top:292px;width:152px;height:8px;background:#3f3f3f"></div>
<div class="a" style="left:656px;top:300px;width:152px;height:16px;background:#474747"></div>
<div class="a" style="left:656px;top:300px;width:27px;height:17px;background:#535353"></div>
<div class="a" style="left:708px;top:300px;width:1px;height:16px;background:#3e3e3e"></div>
<div class="a" style="left:763px;top:300px;width:1px;height:16px;background:#3e3e3e"></div>
<div class="t fit" style="left:664px;top:302px;width:18px;font-size:11px;line-height:13px;color:#f0f0f0;font-weight:bold"><span>変形</span></div>
<div class="t fit" style="left:688px;top:302px;width:16px;font-size:10px;line-height:13px;color:#c6c6c6"><span>整列</span></div>
<div class="t fit" style="left:713px;top:302px;width:46px;font-size:10px;line-height:13px;color:#c6c6c6"><span>パスファインダー</span></div>
<div class="a" style="left:798px;top:305px;width:7px;height:5px;background:#9c9c9c"></div>
<div class="a" style="left:688px;top:322px;width:39px;height:11px;background:#585858"></div>
<div class="a" style="left:747px;top:322px;width:40px;height:11px;background:#585858"></div>
<div class="a" style="left:688px;top:338px;width:39px;height:11px;background:#585858"></div>
<div class="a" style="left:747px;top:338px;width:40px;height:11px;background:#585858"></div>
<div class="a" style="left:688px;top:354px;width:38px;height:11px;background:#585858"></div>
<div class="a" style="left:740px;top:354px;width:38px;height:11px;background:#585858"></div>
<div class="t" style="left:675px;top:322px;font-size:9.5px;line-height:11px;color:#6c6c6c">X :</div>
<div class="t" style="left:675px;top:338px;font-size:9.5px;line-height:11px;color:#6c6c6c">Y :</div>
<div class="t" style="left:731px;top:322px;font-size:9.5px;line-height:11px;color:#6c6c6c">W :</div>
<div class="t" style="left:732px;top:338px;font-size:9.5px;line-height:11px;color:#6c6c6c">H :</div>
<div class="t" style="left:691px;top:322px;font-size:9.5px;line-height:11px;color:#6c6c6c">0 mm</div>
<div class="t" style="left:749px;top:322px;font-size:9.5px;line-height:11px;color:#6c6c6c">0 mm</div>
<div class="t" style="left:691px;top:338px;font-size:9.5px;line-height:11px;color:#6c6c6c">0 mm</div>
<div class="t" style="left:749px;top:338px;font-size:9.5px;line-height:11px;color:#6c6c6c">0 mm</div>
<div class="t" style="left:690px;top:354px;font-size:9.5px;line-height:11px;color:#666">0°</div>
<div class="t" style="left:742px;top:354px;font-size:9.5px;line-height:11px;color:#666">0°</div>
<div class="a" style="left:658px;top:368px;width:147px;height:1px;background:#4c4c4c"></div>
<div class="t fit" style="left:699px;top:409px;width:65px;font-size:10px;line-height:11px;color:#7a7a7a"><span>シェイプの属性なし</span></div>
<svg class="a" style="left:650px;top:290px" width="160" height="90" viewBox="650 290 160 90">
<g fill="none" stroke="#cfcfcf" stroke-width="0.9">
<path d="M793 295 l-2.2 2 l2.2 2 z M796 295 l-2.2 2 l2.2 2 z" fill="#cfcfcf" stroke="none"/>
<path d="M800.5 294.5 l4 4 M804.5 294.5 l-4 4" stroke-width="1.3"/>
<path d="M657 307 l2 -2 l2 2 M657 309.5 l2 2 l2 -2" stroke-width="0.8"/>
<path d="M716.5 358 l2.5 2.5 l2.5 -2.5 M769.5 358 l2.5 2.5 l2.5 -2.5" stroke="#6e6e6e" stroke-width="1"/>
<path d="M678 362.5 h8 M678 362.5 l5 -5 M681 360 a2.5 2.5 0 0 1 1 2.5" stroke="#8a8a8a" stroke-width="1"/>
<path d="M731 363 l3 -6 h6 l-3 6 z" fill="#8a8a8a" stroke="#8a8a8a"/>
<path d="M797.5 330 C795 330 795 333 796 335 C797 337 795.5 340 797.5 340 C800 340 800 337 799 335 C798 333 800 330 797.5 330 Z" stroke-width="1.3"/><path d="M792.8 330.8 L801.5 339" stroke-width="1.4"/>
</g>
<g fill="#535353" stroke="#dcdcdc" stroke-width="0.9">
<circle cx="659.5" cy="329.5" r="1.4"/><circle cx="664" cy="329.5" r="1.4"/><circle cx="668.5" cy="329.5" r="1.4"/>
<circle cx="664" cy="334" r="1.4"/><circle cx="668.5" cy="334" r="1.4"/>
<circle cx="659.5" cy="338.5" r="1.4"/><circle cx="664" cy="338.5" r="1.4"/><circle cx="668.5" cy="338.5" r="1.4"/>
</g>
<rect x="657.5" y="332.5" width="3" height="3" fill="#fff"/>
<path d="M659.5 329.5 h9 M659.5 338.5 h9 M659.5 329.5 v9 M668.5 329.5 v9" stroke="#dcdcdc" stroke-width="0.6" fill="none"/>
</svg>
<!-- DOCK -->
<div class="a" style="left:808px;top:21px;width:30px;height:426px;background:#535353"></div>
<div class="a" style="left:808px;top:21px;width:1px;height:426px;background:#3e3e3e"></div>
<div class="a" style="left:811px;top:21px;width:1px;height:426px;background:#3e3e3e"></div>
<div class="a" style="left:812px;top:21px;width:24px;height:21px;background:#535353;border-right:1px solid #464646;border-bottom:1px solid #464646"></div>
<div class="a" style="left:812px;top:42px;width:26px;height:8px;background:#3f3f3f"></div>
<div class="a" style="left:812px;top:50px;width:24px;height:42px;background:#535353;border-right:1px solid #464646;border-bottom:1px solid #464646"></div>
<div class="a" style="left:812px;top:92px;width:24px;height:59px;background:#535353;border-right:1px solid #464646;border-bottom:1px solid #464646"></div>
<div class="a" style="left:812px;top:151px;width:24px;height:61px;background:#535353;border-right:1px solid #464646;border-bottom:1px solid #464646"></div>
<div class="a" style="left:812px;top:212px;width:24px;height:232px;background:#535353;border-right:1px solid #464646;border-bottom:1px solid #464646"></div>
<div class="a" style="left:817px;top:52px;width:13px;height:1.5px;background:#464646"></div>
<div class="a" style="left:817px;top:94px;width:13px;height:1.5px;background:#464646"></div>
<div class="a" style="left:817px;top:154px;width:13px;height:1.5px;background:#464646"></div>
<svg class="a" style="left:808px;top:20px" width="30" height="200" viewBox="808 20 30 200">
<g fill="#d6d6d6" stroke="none">
<rect x="817" y="28.5" width="2" height="1.5"/><rect x="820" y="28.5" width="6" height="1.5"/>
<rect x="817" y="31" width="2" height="1.5"/><rect x="820" y="31" width="6" height="1.5"/>
<rect x="817" y="33.5" width="2" height="1.5"/><rect x="820" y="33.5" width="6" height="1.5"/>
<path d="M831 44 l-2.5 2 l2.5 2 z M834 44 l-2.5 2 l2.5 2 z" fill="#cfcfcf"/>
<path d="M818 64 C817 59 823 57 827 58.5 C831 60 831 64 828 64.5 C826 65 826 67 824 68 C821 69 818.5 67 818 64 Z"/>
<path d="M820 77 A10 10 0 0 1 830 86 H820 Z" fill="#cfcfcf"/>
<path d="M821 111 C816 111 816 104 820.5 104 C822 101 827 101 828 104 C832 104 832 111 827.5 111 Z" fill="none" stroke="#d4d4d4" stroke-width="1.5"/><path d="M820.5 108.5 C822 105 825 105 826 107.5 C827 110 829.5 108.5 828.5 106.5" fill="none" stroke="#d4d4d4" stroke-width="1.2"/>
<circle cx="824" cy="123" r="4.5" fill="#dcdcdc"/>
<path d="M824 117 v1.5 M824 127.5 v1.5 M818 123 h1.5 M828.5 123 h1.5 M819.8 118.8 l1 1 M827.2 126.2 l1 1 M819.8 127.2 l1 -1 M827.2 119.8 l1 -1" stroke="#dcdcdc" stroke-width="0.8"/>
<rect x="821.5" y="135.5" width="8" height="8" fill="none" stroke="#cfcfcf" stroke-width="1.2"/><circle cx="821" cy="142.5" r="2.8" fill="#d8d8d8" stroke="#535353" stroke-width="0.8"/><circle cx="820.5" cy="141.5" r="1" fill="#333"/>
<path d="M819 160.5 v10 h10 v-4 M823 160.5 h-4 M823.5 166 l5.5 -5.5 M825 160.5 h4 v4" fill="none" stroke="#cfcfcf" stroke-width="1.2"/>
<path d="M824 178 l5.5 3 l-5.5 3 l-5.5 -3 z"/><path d="M818.5 183.5 l5.5 3 l5.5 -3" fill="none" stroke="#cfcfcf" stroke-width="1.4"/>
<rect x="818.5" y="194.5" width="7" height="6" fill="none" stroke="#cfcfcf" stroke-width="1.2"/><rect x="822.5" y="197.5" width="7" height="6" fill="#535353" stroke="#cfcfcf" stroke-width="1.2"/>
</g>
<g fill="#6a6a6a"><circle cx="821" cy="62" r="1"/><circle cx="824" cy="61" r="1"/><circle cx="827" cy="62" r="1"/><circle cx="822" cy="65.5" r="1.1"/></g>
<defs><linearGradient id="dg" x1="0" y1="0" x2="1" y2="1"><stop offset="0" stop-color="#fff"/><stop offset="1" stop-color="#888"/></linearGradient></defs>
<path d="M820 77 A10 10 0 0 1 830 86 H820 Z" fill="url(#dg)"/>
</svg>
<script>
(function(){var e=document.querySelectorAll('.fit');for(var i=0;i<e.length;i++){var d=e[i],sp=d.firstElementChild;var w=parseFloat(d.style.width);var n=sp.getBoundingClientRect().width;if(n>0&&w>0){sp.style.transform='scaleX('+(w/n)+')';}}})();
</script>
</body></html>
